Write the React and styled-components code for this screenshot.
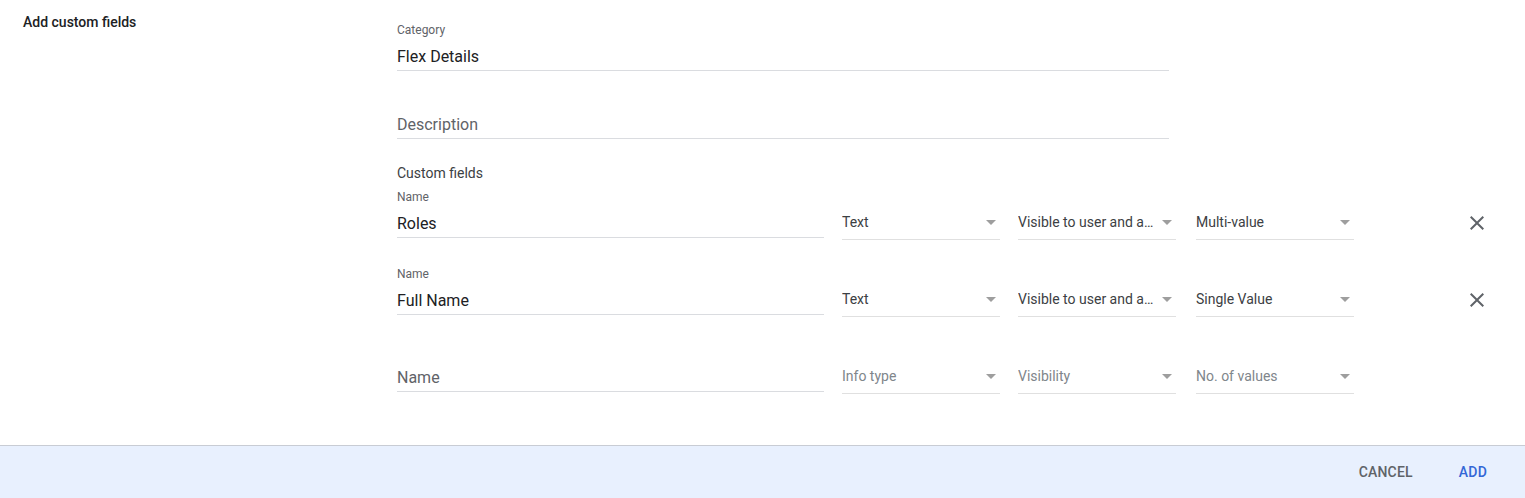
import React from 'react';
import styled, { createGlobalStyle } from 'styled-components';

const GlobalStyle = createGlobalStyle`
  body {
    margin: 0;
    background: #ffffff;
    font-family: Roboto, "Liberation Sans", sans-serif;
    color: #202124;
  }
`;

const Page = styled.div`
  width: 1525px;
  height: 498px;
  display: flex;
  flex-direction: column;
  overflow: hidden;
`;

const Body = styled.div`
  flex: 1;
  display: flex;
`;

const SectionTitle = styled.div`
  width: 374px;
  padding: 14px 0 0 23px;
  font-size: 14px;
  line-height: 16px;
  font-weight: 500;
  color: #202124;
`;

const Form = styled.div`
  display: flex;
  flex-direction: column;
  padding-top: 22px;
`;

const Field = styled.div`
  width: ${p => p.width}px;
  display: flex;
  flex-direction: column;
  margin-top: ${p => p.top || 0}px;
`;

const Label = styled.div`
  font-size: 12px;
  line-height: 16px;
  height: 16px;
  color: #5f6368;
  margin-bottom: 9px;
`;

const Value = styled.div`
  font-size: 16px;
  line-height: 20px;
  height: 20px;
  padding-bottom: 3px;
  border-bottom: 1px solid #dadce0;
  color: ${p => (p.placeholder ? '#5f6368' : '#202124')};
`;

const GroupHeading = styled.div`
  margin-top: 24px;
  font-size: 14px;
  line-height: 20px;
  color: #3c4043;
`;

const Rows = styled.div`
  display: flex;
  flex-direction: column;
  gap: 26px;
  margin-top: 6px;
`;

const Row = styled.div`
  display: flex;
  align-items: flex-start;
`;

const Select = styled.div`
  width: 158px;
  margin-left: ${p => p.gap}px;
  margin-top: 23px;
  display: flex;
  align-items: center;
  padding-bottom: 7px;
  border-bottom: 1px solid #e0e0e0;
  box-sizing: border-box;
`;

const SelectText = styled.span`
  flex: 1;
  min-width: 0;
  font-size: 14px;
  line-height: 20px;
  color: ${p => (p.placeholder ? '#80868b' : '#3c4043')};
  white-space: nowrap;
  overflow: hidden;
  text-overflow: ellipsis;
`;

const Caret = styled.span`
  width: 0;
  height: 0;
  margin: 0 4px 0 6px;
  border-left: 5px solid transparent;
  border-right: 5px solid transparent;
  border-top: 5px solid #9e9e9e;
`;

const RemoveButton = styled.button`
  margin: 22px 0 0 111px;
  width: 24px;
  height: 24px;
  padding: 0;
  border: none;
  background: none;
  color: #5f6368;
  display: flex;
  align-items: center;
  justify-content: center;
  visibility: ${p => (p.hidden ? 'hidden' : 'visible')};
`;

const Footer = styled.div`
  height: 52px;
  border-top: 1px solid #c8ccd4;
  background: #e8f0fe;
  display: flex;
  align-items: center;
  justify-content: flex-end;
  gap: 14px;
  padding-right: 22px;
`;

const FooterButton = styled.button`
  border: none;
  background: none;
  padding: 0 16px;
  height: 36px;
  font-family: Roboto, "Liberation Sans", sans-serif;
  font-size: 14px;
  font-weight: 500;
  letter-spacing: 0.2px;
  color: ${p => (p.primary ? '#3367d6' : '#5f6368')};
`;

const CloseIcon = () => (
  <svg width="24" height="24" viewBox="0 0 24 24" fill="currentColor">
    <path d="M19 6.41 17.59 5 12 10.59 6.41 5 5 6.41 10.59 12 5 17.59 6.41 19 12 13.41 17.59 19 19 17.59 13.41 12z" />
  </svg>
);

const fields = [
  { name: 'Roles', type: 'Text', visibility: 'Visible to user and admin', values: 'Multi-value' },
  { name: 'Full Name', type: 'Text', visibility: 'Visible to user and admin', values: 'Single Value' },
  { name: '', type: '', visibility: '', values: '' },
];

const FieldRow = ({ field }) => {
  const empty = !field.name;
  return (
    <Row>
      <Field width={427}>
        <Label>{empty ? '' : 'Name'}</Label>
        <Value placeholder={empty ? 1 : 0}>{field.name || 'Name'}</Value>
      </Field>
      <Select gap={18}>
        <SelectText placeholder={empty ? 1 : 0}>{field.type || 'Info type'}</SelectText>
        <Caret />
      </Select>
      <Select gap={18}>
        <SelectText placeholder={empty ? 1 : 0}>{field.visibility || 'Visibility'}</SelectText>
        <Caret />
      </Select>
      <Select gap={20}>
        <SelectText placeholder={empty ? 1 : 0}>{field.values || 'No. of values'}</SelectText>
        <Caret />
      </Select>
      <RemoveButton hidden={empty}>
        <CloseIcon />
      </RemoveButton>
    </Row>
  );
};

export default function App() {
  return (
    <Page>
      <GlobalStyle />
      <Body>
        <SectionTitle>Add custom fields</SectionTitle>
        <Form>
          <Field width={772}>
            <Label>Category</Label>
            <Value>Flex Details</Value>
          </Field>
          <Field width={772} top={44}>
            <Value placeholder={1}>Description</Value>
          </Field>
          <GroupHeading>Custom fields</GroupHeading>
          <Rows>
            {fields.map((f, i) => (
              <FieldRow key={i} field={f} />
            ))}
          </Rows>
        </Form>
      </Body>
      <Footer>
        <FooterButton>CANCEL</FooterButton>
        <FooterButton primary>ADD</FooterButton>
      </Footer>
    </Page>
  );
}
